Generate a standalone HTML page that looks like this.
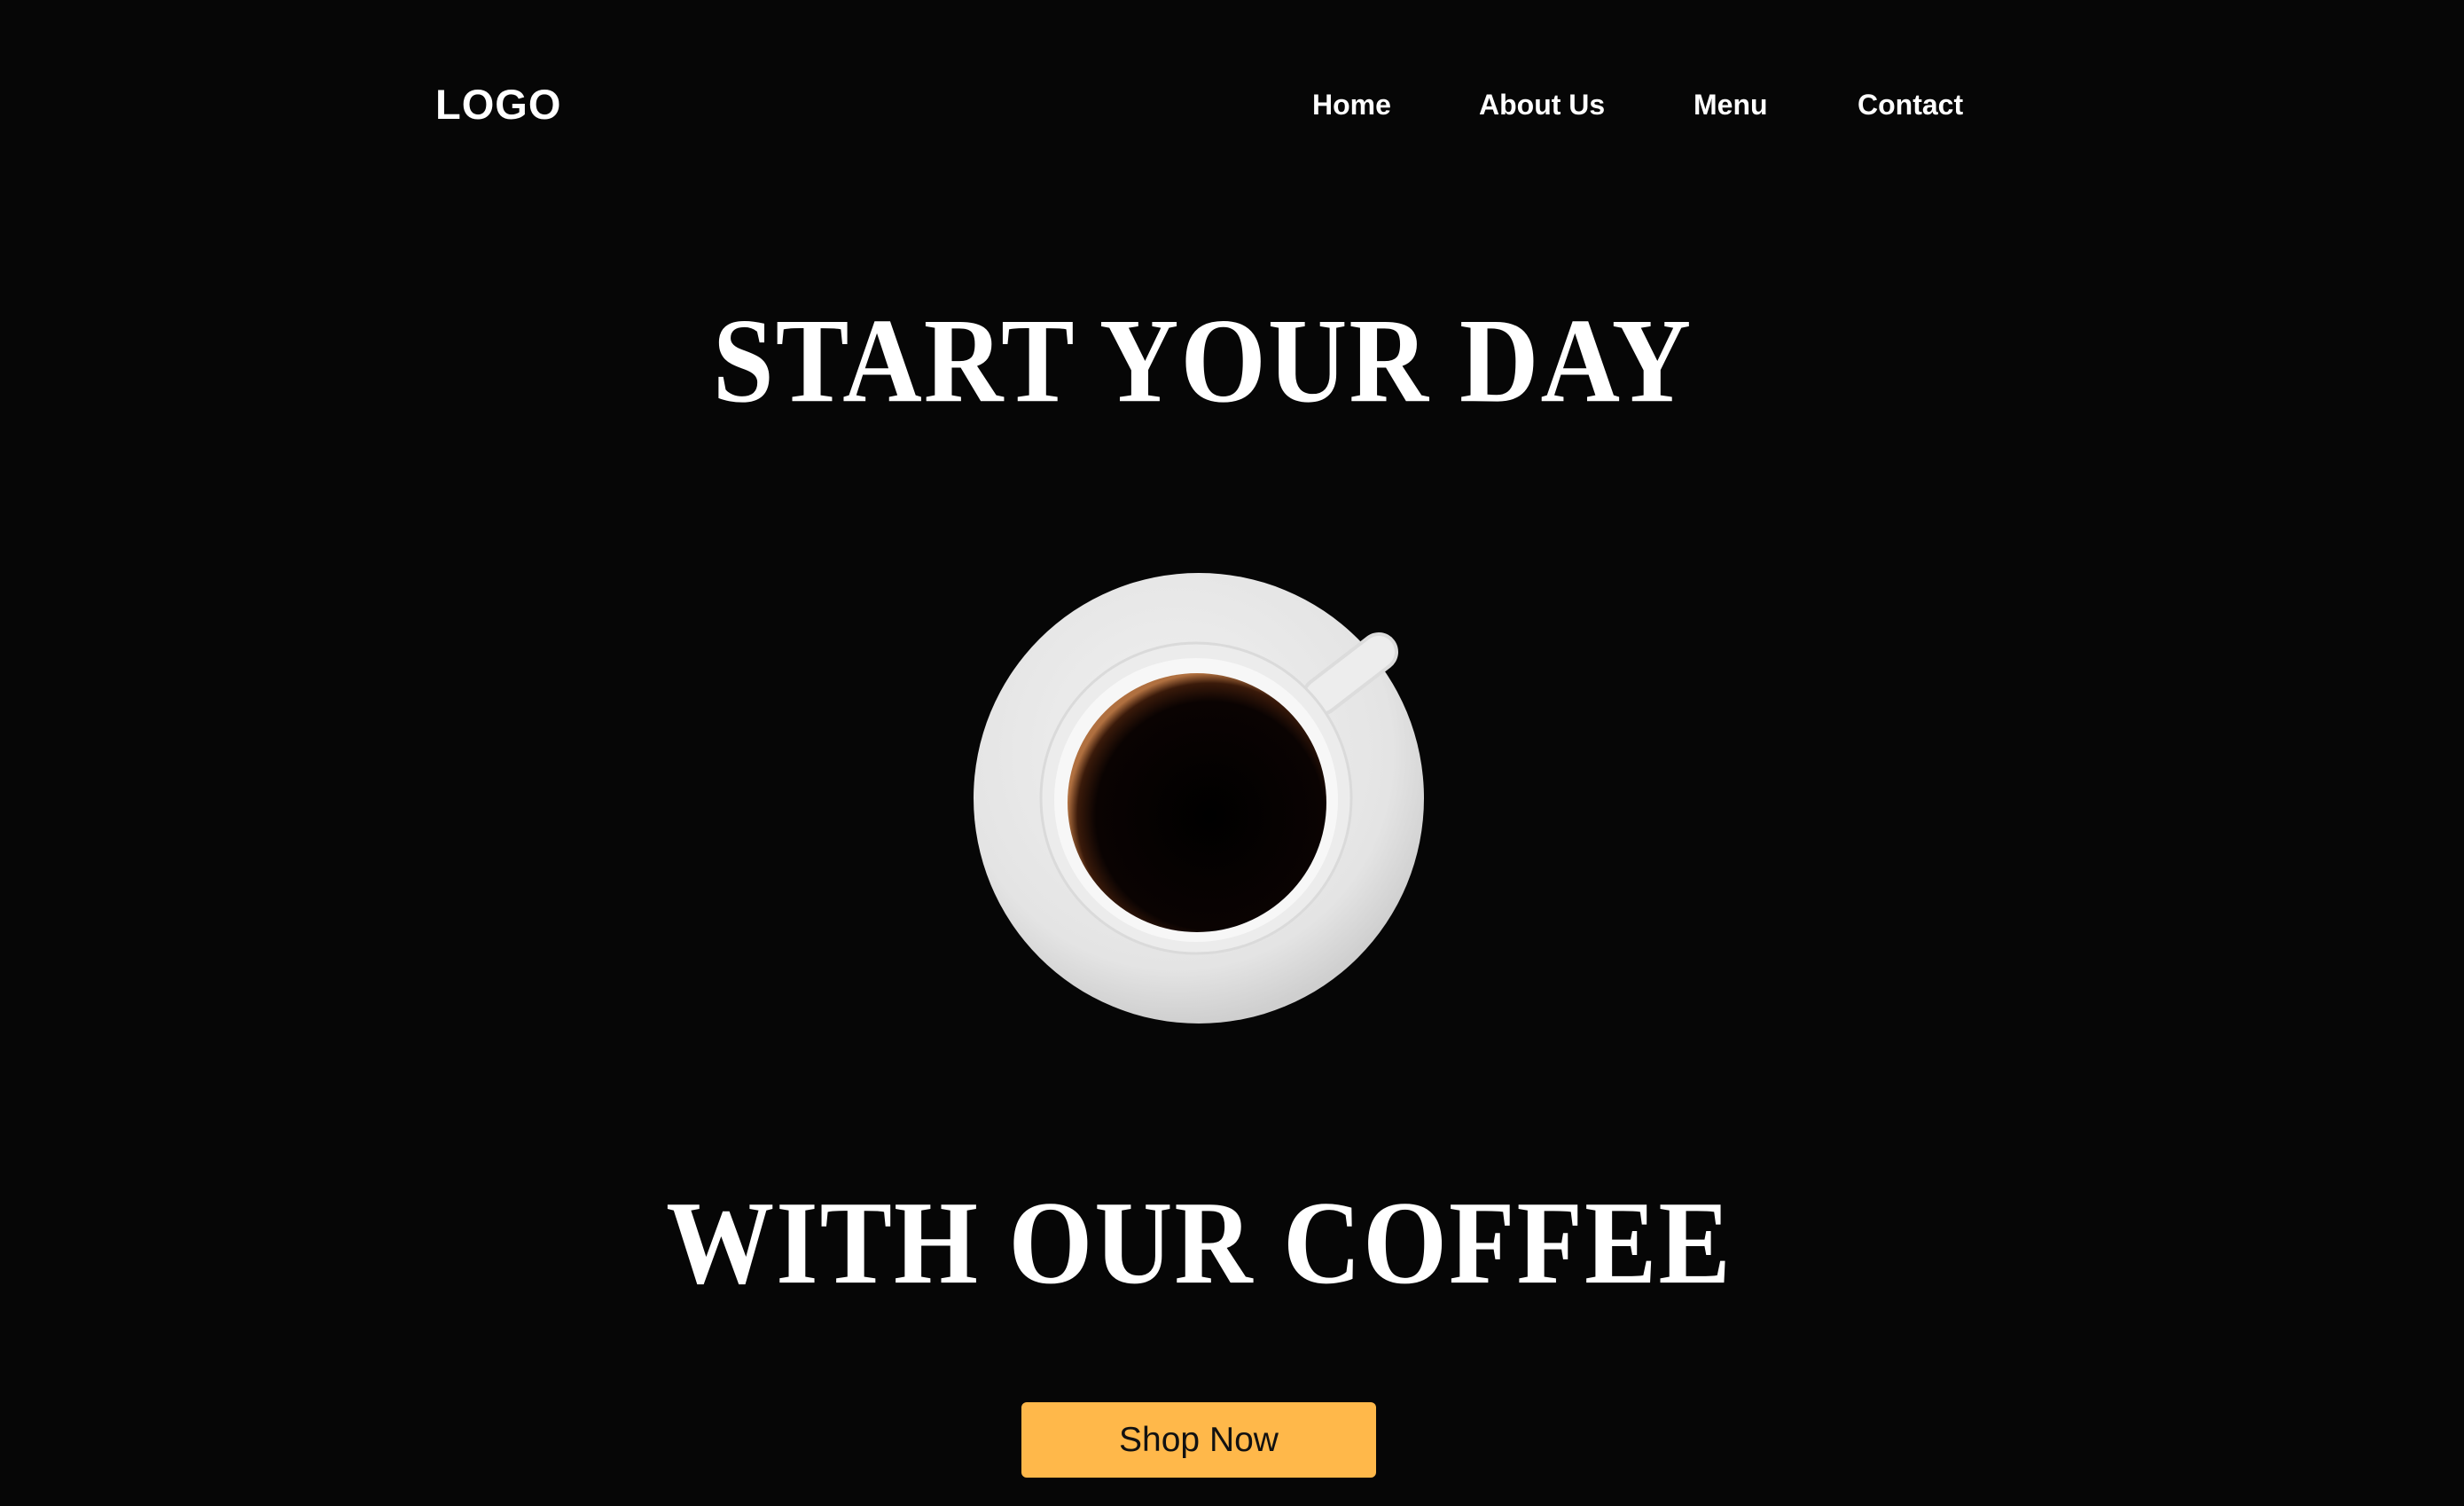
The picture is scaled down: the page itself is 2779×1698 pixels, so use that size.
<!DOCTYPE html>
<html><head><meta charset="utf-8"><style>
html,body{margin:0;padding:0;background:#060606;width:2779px;height:1698px;overflow:hidden;font-family:"Liberation Sans",sans-serif;color:#fff}
.logo{position:absolute;left:491px;top:90px;font-size:47px;font-weight:bold;letter-spacing:1px}
.nav a{position:absolute;top:100px;font-size:32px;font-weight:bold;color:#fff;text-decoration:none}
h1{position:absolute;width:2779px;text-align:center;margin:0;font-family:"Liberation Serif",serif;font-weight:bold;line-height:1;letter-spacing:2px;color:#fff;transform:scaleY(1.1);transform-origin:top}
.btn{position:absolute;left:1152px;top:1581px;width:400px;height:85px;background:#ffb84a;border-radius:6px;color:#111;font-size:39px;text-align:center;line-height:85px}
</style></head><body>
<div class="logo">LOGO</div>
<div class="nav">
<a style="left:1480px">Home</a>
<a style="left:1668px">About Us</a>
<a style="left:1910px">Menu</a>
<a style="left:2095px">Contact</a>
</div>
<h1 style="left:-33px;top:339px;font-size:124px">START YOUR DAY</h1>
<svg style="position:absolute;left:1000px;top:600px" width="700" height="600" viewBox="1000 600 700 600">
<defs>
<radialGradient id="s" cx="0.45" cy="0.4" r="0.6"><stop offset="0" stop-color="#f2f2f2"/><stop offset="0.8" stop-color="#e4e4e4"/><stop offset="1" stop-color="#cfcfcf"/></radialGradient>
<radialGradient id="c" cx="0.55" cy="0.55" r="0.55"><stop offset="0" stop-color="#000"/><stop offset="0.8" stop-color="#0a0302"/><stop offset="0.93" stop-color="#3a1a0a"/><stop offset="1" stop-color="#b07040"/></radialGradient>
</defs>
<circle cx="1352" cy="900" r="254" fill="url(#s)"/>
<line x1="1490" y1="785" x2="1555" y2="735" stroke="#dcdcdc" stroke-width="44" stroke-linecap="round"/>
<line x1="1490" y1="785" x2="1555" y2="735" stroke="#ededed" stroke-width="36" stroke-linecap="round"/>
<circle cx="1349" cy="900" r="175" fill="#ececec" stroke="#dadada" stroke-width="3"/>
<circle cx="1349" cy="902" r="160" fill="#f7f7f7"/>
<circle cx="1350" cy="905" r="146" fill="url(#c)"/>
</svg>
<h1 style="left:-37px;top:1335px;font-size:122px">WITH OUR COFFEE</h1>
<div class="btn">Shop Now</div>
</body></html>
